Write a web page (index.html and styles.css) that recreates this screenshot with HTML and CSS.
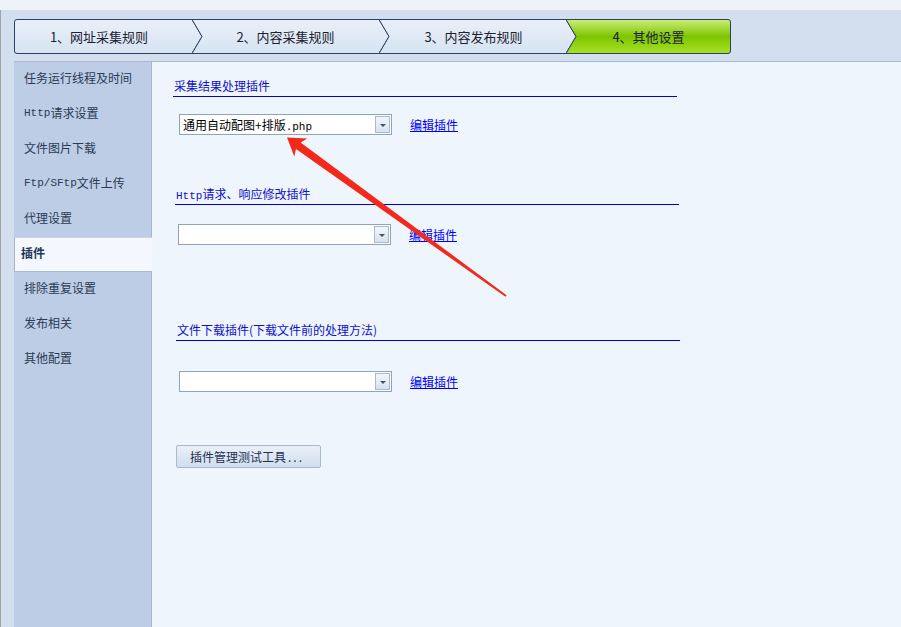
FILE: index.html
```html
<!DOCTYPE html>
<html lang="zh-CN">
<head>
<meta charset="utf-8">
<title>其他设置</title>
<link rel="stylesheet" href="styles.css">
</head>
<body>
<div class="app">
  <div class="topstrip"></div>
  <div class="main">
    <div class="edge"></div>
    <div class="right">
      <div class="tabbar">
        <div class="tabs">
          <svg class="tabshapes" width="717" height="35" viewBox="0 0 717 35">
            <defs>
              <linearGradient id="gl" x1="0" y1="0" x2="0" y2="1">
                <stop offset="0" stop-color="#e9f0fa"/>
                <stop offset="1" stop-color="#d7e3f2"/>
              </linearGradient>
              <linearGradient id="gg" x1="0" y1="0" x2="0" y2="1">
                <stop offset="0" stop-color="#cdee7c"/>
                <stop offset="0.5" stop-color="#7ec500"/>
                <stop offset="1" stop-color="#a8e224"/>
              </linearGradient>
            </defs>
            <path d="M0.5,3 Q0.5,0.5 3,0.5 H178 L188,17.5 L178,34.5 H3 Q0.5,34.5 0.5,32 Z" fill="url(#gl)" stroke="#2d4261"/>
            <path d="M178,0.5 H365 L375,17.5 L365,34.5 H178 L188,17.5 Z" fill="url(#gl)" stroke="#2d4261"/>
            <path d="M365,0.5 H552 L562,17.5 L552,34.5 H365 L375,17.5 Z" fill="url(#gl)" stroke="#2d4261"/>
            <path d="M552,0.5 H714 Q716.5,0.5 716.5,3 V32 Q716.5,34.5 714,34.5 H552 L562,17.5 Z" fill="url(#gg)" stroke="#2d4261"/>
          </svg>
          <div class="tablabels">
            <span class="tab tab1">1、网址采集规则</span>
            <span class="tab tab2">2、内容采集规则</span>
            <span class="tab tab3">3、内容发布规则</span>
            <span class="tab tab4">4、其他设置</span>
          </div>
        </div>
      </div>
      <div class="body">
        <ul class="sidebar">
          <li class="item">任务运行线程及时间</li>
          <li class="item"><span class="lat">Http</span>请求设置</li>
          <li class="item">文件图片下载</li>
          <li class="item"><span class="lat">Ftp/SFtp</span>文件上传</li>
          <li class="item">代理设置</li>
          <li class="item active">插件</li>
          <li class="item">排除重复设置</li>
          <li class="item">发布相关</li>
          <li class="item">其他配置</li>
        </ul>
        <div class="content">
          <div class="group-title t1">采集结果处理插件</div>
          <div class="row r1">
            <div class="select"><span class="value">通用自动配图+排版<span class="lat">.php</span></span><span class="drop"><span class="tri"></span></span></div>
            <a class="link" href="#">编辑插件</a>
          </div>

          <div class="group-title t2"><span class="lat">Http</span>请求、响应修改插件</div>
          <div class="row r2">
            <div class="select"><span class="value"></span><span class="drop"><span class="tri"></span></span></div>
            <a class="link" href="#">编辑插件</a>
          </div>

          <div class="group-title t3">文件下载插件(下载文件前的处理方法)</div>
          <div class="row r3">
            <div class="select"><span class="value"></span><span class="drop"><span class="tri"></span></span></div>
            <a class="link" href="#">编辑插件</a>
          </div>

          <button class="btn" type="button">插件管理测试工具<span class="dots">...</span></button>
        </div>
      </div>
    </div>
  </div>
  <svg class="annot" width="901" height="627" viewBox="0 0 901 627">
    <polygon points="287,137.5 307.3,138.6 300.6,142.5 506.6,295.2 505.4,296.8 296,148.9 294.3,156.4" fill="#f5281c"/>
  </svg>
</div>
</body>
</html>
```

FILE: styles.css
```css
html, body {
  margin: 0;
  padding: 0;
}
body {
  width: 901px;
  height: 627px;
  overflow: hidden;
  font-family: "Noto Sans CJK SC", "Noto Sans", sans-serif;
  font-size: 12px;
  background: #eef5fd;
}
.app {
  position: relative;
  width: 901px;
  height: 627px;
  display: flex;
  flex-direction: column;
}
.topstrip {
  height: 10px;
  background: #eef3f9;
}
.main {
  flex: 1;
  display: flex;
  min-height: 0;
}
.edge {
  width: 13px;
  border-left: 1px solid #a3a3a3;
  background: #d3dfee;
}
.right {
  flex: 1;
  display: flex;
  flex-direction: column;
  min-width: 0;
}
.tabbar {
  height: 42px;
  padding-top: 9px;
  background: #d3dfee;
  border-bottom: 1px solid #a9b9d0;
}
.tabs {
  position: relative;
  width: 717px;
  height: 35px;
}
.tabshapes {
  position: absolute;
  left: 0;
  top: 0;
}
.tablabels {
  position: relative;
  display: flex;
  height: 35px;
}
.tab {
  display: flex;
  align-items: center;
  justify-content: center;
  height: 35px;
  font-size: 13px;
  color: #1c2030;
  white-space: nowrap;
}
.tab1 { width: 170px; padding-right: 8px; }
.tab2 { width: 187px; }
.tab3 { width: 185px; padding-left: 2px; }
.tab4 { width: 165px; }
.body {
  flex: 1;
  display: flex;
  min-height: 0;
}
.sidebar {
  list-style: none;
  margin: 0;
  padding: 0;
  width: 137px;
  background: #bccde5;
  border-right: 1px solid #a3b7d1;
}
.item {
  height: 31px;
  padding: 0 0 4px 10px;
  display: flex;
  align-items: center;
  color: #2b3a55;
  font-size: 12px;
  white-space: nowrap;
}
.item.active {
  height: 29px;
  padding-left: 6px;
  margin-right: -1px;
  background: #f4f8fe;
  border-top: 1px solid #c9d6e8;
  border-bottom: 1px solid #a8bad2;
  border-left: 1px solid #a8b3c2;
  font-weight: bold;
  color: #1d3557;
}
.lat {
  font-family: "Liberation Mono", "DejaVu Sans Mono", monospace;
  font-size: 11px;
}
.content {
  flex: 1;
  padding-left: 21px;
  background: #eef5fd;
}
.group-title {
  width: 503px;
  height: 16px;
  line-height: 16px;
  padding: 0 0 2px 1px;
  border-bottom: 1px solid #0000e0;
  color: #1010cc;
  font-size: 12px;
  white-space: nowrap;
  overflow: hidden;
}
.t1 { margin-top: 16px; }
.t2 { margin-top: 51px; margin-left: 2px; }
.t3 { margin-top: 77px; margin-left: 3px; }
.row {
  display: flex;
  align-items: center;
  height: 21px;
  margin-left: 6px;
}
.r1 { margin-top: 17px; }
.r2 { margin-top: 19px; margin-left: 5px; }
.r3 { margin-top: 30px; }
.select {
  box-sizing: border-box;
  width: 213px;
  height: 21px;
  border: 1px solid #8ea3bf;
  background: #ffffff;
  display: flex;
  align-items: center;
}
.value {
  flex: 1;
  padding-left: 3px;
  color: #000000;
  font-size: 12px;
  white-space: nowrap;
}
.drop {
  box-sizing: border-box;
  width: 15px;
  height: 17px;
  margin-right: 1px;
  border: 1px solid #aab9cf;
  background: linear-gradient(#f2f6fb, #d6e1ee);
  display: flex;
  align-items: center;
  justify-content: center;
}
.tri {
  width: 0;
  height: 0;
  border-left: 3px solid transparent;
  border-right: 3px solid transparent;
  border-top: 3px solid #4a5060;
  margin-top: 1px;
}
.link {
  margin-left: 18px;
  color: #0000ff;
  text-decoration: underline;
  font-size: 12px;
}
.btn {
  display: block;
  box-sizing: border-box;
  width: 145px;
  height: 23px;
  margin: 53px 0 0 3px;
  padding: 0 0 0 13px;
  text-align: left;
  border: 1px solid #a9b8cc;
  border-radius: 2px;
  background: linear-gradient(#e9f0f9, #d2deed);
  font-family: "Noto Sans CJK SC", "Noto Sans", sans-serif;
  font-size: 12px;
  color: #1e3050;
}
.dots {
  letter-spacing: 2px;
  padding-left: 2px;
}
.annot {
  position: absolute;
  left: 0;
  top: 0;
  pointer-events: none;
}
```
